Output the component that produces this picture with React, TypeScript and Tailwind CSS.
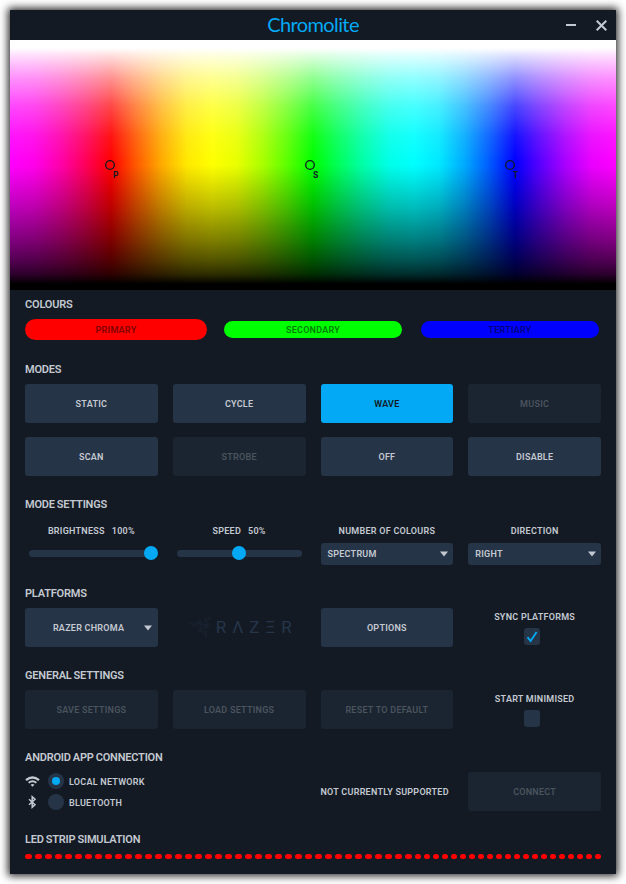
import type { ReactNode } from "react";
import { SiRazer } from "react-icons/si";

function Section({ title, className = "", children }: { title: string; className?: string; children: ReactNode }) {
  return (
    <section className={className}>
      <h2 className="flex h-[30px] items-center whitespace-pre text-[11px] font-semibold leading-none tracking-[-0.2px] [word-spacing:-0.5px]">
        {title}
      </h2>
      {children}
    </section>
  );
}

function Button({ label, variant = "normal" }: { label: string; variant?: "normal" | "active" | "disabled" }) {
  const tone =
    variant === "active"
      ? "bg-[#03a9f4] text-[#131a24]"
      : variant === "disabled"
        ? "bg-[#1a2531] text-[#4b535d]"
        : "bg-[#263447] text-[#c4c9d1]";
  return (
    <button className={`flex h-[39px] w-full items-center justify-center rounded-[3px] pt-[2px] ${tone}`}>
      {label}
    </button>
  );
}

function Caret() {
  return (
    <svg width="8" height="6" viewBox="0 0 8 6">
      <path d="M0 0.5h8L4 5.5z" fill="#c4c9d1" />
    </svg>
  );
}

function Select({ label, value }: { label: string; value: string }) {
  return (
    <div>
      <div className="flex h-6 items-center justify-center">{label}</div>
      <div className="flex h-[22px] items-center justify-between rounded-[3px] bg-[#263447] pl-[7px] pr-[5.5px]">
        <span>{value}</span>
        <Caret />
      </div>
    </div>
  );
}

function Slider({ label, value }: { label: string; value: number }) {
  return (
    <div>
      <div className="flex h-6 items-center justify-center gap-[7px]">
        <span>{label}</span>
        <span>{value}%</span>
      </div>
      <div className="relative mx-1 mt-[7px] h-[7px] rounded-full bg-[#263447]">
        <div
          className="absolute -top-1 size-[14px] rounded-full bg-[#03a9f4]"
          style={{ left: `${value === 100 ? 115 : (value / 100) * 125 - 7}px` }}
        />
      </div>
    </div>
  );
}

function Check({ label, checked }: { label: string; checked?: boolean }) {
  return (
    <div className="flex flex-col items-center">
      <div className="flex h-5 items-center whitespace-nowrap pb-[2px]">{label}</div>
      <div className="mr-[5px] flex h-[17px] w-4 items-center justify-center rounded-[3px] bg-[#263447]">
        {checked && (
          <svg width="12" height="13" viewBox="0 0 12 13" fill="none">
            <path d="M1.5 7.2L4.6 11L10.6 2" stroke="#03a9f4" strokeWidth="1.9" />
          </svg>
        )}
      </div>
    </div>
  );
}

function Marker({ letter, className }: { letter: string; className: string }) {
  return (
    <div className={`absolute top-[120px] ${className}`}>
      <svg width="10" height="10" viewBox="0 0 10 10">
        <circle cx="5" cy="5" r="4.3" fill="none" stroke="#131a24" strokeWidth="1.3" />
      </svg>
      <span className="absolute left-2 top-[11px] text-[8.5px] font-bold leading-none text-[#131a24]">{letter}</span>
    </div>
  );
}

const hue =
  "bg-[linear-gradient(90deg,#ff00ff_0%,#ff00e8_4.17%,#ff00aa_8.33%,#ff005a_12.5%,#ff0000_16.67%,#ff5a00_20.83%,#ffaa00_25%,#ffe800_29.17%,#ffff00_33.33%,#e8ff00_37.5%,#aaff00_41.67%,#5aff00_45.83%,#00ff00_50%,#00ff5a_54.17%,#00ffaa_58.33%,#00ffe8_62.5%,#00ffff_66.67%,#00e8ff_70.83%,#00aaff_75%,#005aff_79.17%,#0000ff_83.33%,#5a00ff_87.5%,#aa00ff_91.67%,#e800ff_95.83%,#ff00ff_100%)]";
const shade =
  "bg-[linear-gradient(180deg,#fff_0px,#fff_8px,rgba(255,255,255,0.88)_15px,rgba(255,255,255,0.78)_22px,rgba(255,255,255,0.58)_37px,rgba(255,255,255,0.28)_66px,rgba(255,255,255,0.08)_96px,rgba(255,255,255,0)_122px,rgba(0,0,0,0)_125px,rgba(0,0,0,0.09)_140px,rgba(0,0,0,0.26)_167px,rgba(0,0,0,0.5)_200px,rgba(0,0,0,0.67)_220px,rgba(0,0,0,0.82)_234px,#000_244px,#000_250px)]";

export default function App() {
  return (
    <div className="h-[884px] w-[626px] overflow-hidden bg-white p-[10px] font-[Roboto,sans-serif]">
      <main className="h-[864px] w-[606px] bg-[#131a24] text-[#c4c9d1] shadow-[0_0_8px_2px_rgba(0,0,0,0.85)]">
        <header className="grid h-[30px] grid-cols-[1fr_auto_1fr] items-center">
          <span />
          <h1 className="pb-[2px] font-[Lato,sans-serif] text-[20px] leading-none tracking-[-0.6px] text-[#03a9f4]">
            Chromolite
          </h1>
          <div className="flex items-center justify-end gap-[15px] pr-[9px]">
            <div className="mr-[5px] h-[2px] w-[10px] bg-[#c4c9d1]" />
            <svg width="11" height="11" viewBox="0 0 11 11">
              <path d="M.7.7l9.6 9.6M10.3.7L.7 10.3" stroke="#c4c9d1" strokeWidth="2" />
            </svg>
          </div>
        </header>

        <div className={`relative h-[250px] ${hue}`}>
          <div className={`h-full ${shade}`} />
          <Marker letter="P" className="left-[95px]" />
          <Marker letter="S" className="left-[295px]" />
          <Marker letter="T" className="left-[495px]" />
        </div>

        <div className="-mt-px px-[15px] text-[9px] font-semibold leading-none tracking-[0.25px]">
          <Section title="COLOURS" className="h-[65px]">
            <div className="flex h-[21px] items-center">
              <div className="flex h-[21px] w-[182px] items-center justify-center rounded-full bg-[#ff0000] pt-[2px] text-[#7f0000]">
                PRIMARY
              </div>
              <div className="ml-[17px] flex h-[17px] w-[178px] items-center justify-center rounded-full bg-[#00ff00] pt-[2px] text-[#007f00]">
                SECONDARY
              </div>
              <div className="ml-[19px] flex h-[17px] w-[178px] items-center justify-center rounded-full bg-[#0000ff] pt-[2px] text-[#00007f]">
                TERTIARY
              </div>
            </div>
          </Section>

          <Section title="MODES" className="h-[135px]">
            <div className="grid grid-cols-4 gap-x-[15px] gap-y-[14px]">
              <Button label="STATIC" />
              <Button label="CYCLE" />
              <Button label="WAVE" variant="active" />
              <Button label="MUSIC" variant="disabled" />
              <Button label="SCAN" />
              <Button label="STROBE" variant="disabled" />
              <Button label="OFF" />
              <Button label="DISABLE" />
            </div>
          </Section>

          <Section title="MODE SETTINGS" className="h-[89px]">
            <div className="grid grid-cols-4 gap-x-[15px]">
              <Slider label="BRIGHTNESS" value={100} />
              <Slider label="SPEED" value={50} />
              <Select label="NUMBER OF COLOURS" value="SPECTRUM" />
              <Select label="DIRECTION" value="RIGHT" />
            </div>
          </Section>

          <Section title="PLATFORMS" className="h-[82px]">
            <div className="grid grid-cols-4 gap-x-[15px]">
              <div className="flex h-[39px] items-center justify-end gap-5 rounded-[3px] bg-[#263447] pr-[5.5px]">
                <span className="pt-[2px]">RAZER CHROMA</span>
                <Caret />
              </div>
              <div className="flex h-[39px] items-center pl-[17px] text-[#26354a]">
                <SiRazer size={21} className="text-[#1e2d3d]" />
                <div className="ml-[5px] flex w-[76px] justify-between text-[17px] font-normal tracking-normal">
                  <span>R</span>
                  <span>Λ</span>
                  <span>Z</span>
                  <span>Ξ</span>
                  <span>R</span>
                </div>
              </div>
              <Button label="OPTIONS" />
              <Check label="SYNC PLATFORMS" checked />
            </div>
          </Section>

          <Section title="GENERAL SETTINGS" className="h-[82px]">
            <div className="grid grid-cols-4 gap-x-[15px]">
              <Button label="SAVE SETTINGS" variant="disabled" />
              <Button label="LOAD SETTINGS" variant="disabled" />
              <Button label="RESET TO DEFAULT" variant="disabled" />
              <Check label="START MINIMISED" />
            </div>
          </Section>

          <Section title="ANDROID APP CONNECTION" className="h-[82px]">
            <div className="grid grid-cols-4 gap-x-[15px]">
              <div className="col-span-2 flex flex-col gap-[5px] pt-[1px]">
                <div className="flex h-4 items-center">
                  <svg width="15" height="11" viewBox="0 0 15 11" fill="none" stroke="#c4c9d1">
                    <path d="M1 4.1Q7.5-1.3 14 4.1" strokeWidth="2.4" />
                    <path d="M3.6 6.7Q7.5 3.7 11.4 6.7" strokeWidth="2" />
                    <path d="M5.6 8.7Q7.5 7.4 9.4 8.7L7.5 10.8z" fill="#c4c9d1" stroke="none" />
                  </svg>
                  <div className="ml-2 flex size-4 items-center justify-center rounded-full bg-[#263447]">
                    <div className="size-2 rounded-full bg-[#03a9f4]" />
                  </div>
                  <span className="ml-[5px] pt-[2px]">LOCAL NETWORK</span>
                </div>
                <div className="flex h-4 items-center">
                  <svg width="15" height="14" viewBox="0 0 15 14" fill="none" stroke="#c4c9d1" strokeWidth="1.5">
                    <path d="M4 4.2L10 9.8L7.2 12.3V1.7L10 4.2L4 9.8" />
                  </svg>
                  <div className="ml-2 size-4 rounded-full bg-[#263447]" />
                  <span className="ml-[5px] pt-[2px]">BLUETOOTH</span>
                </div>
              </div>
              <div className="flex items-center whitespace-nowrap pt-[2px]">NOT CURRENTLY SUPPORTED</div>
              <Button label="CONNECT" variant="disabled" />
            </div>
          </Section>

          <Section title="LED STRIP SIMULATION">
            <div className="flex gap-[3px]">
              {Array.from({ length: 60 }, (_, i) => (
                <div key={i} className={`h-[5px] rounded-full bg-[#ff0000] ${i < 39 ? "w-[7px]" : "w-[6px]"}`} />
              ))}
            </div>
          </Section>
        </div>
      </main>
    </div>
  );
}
